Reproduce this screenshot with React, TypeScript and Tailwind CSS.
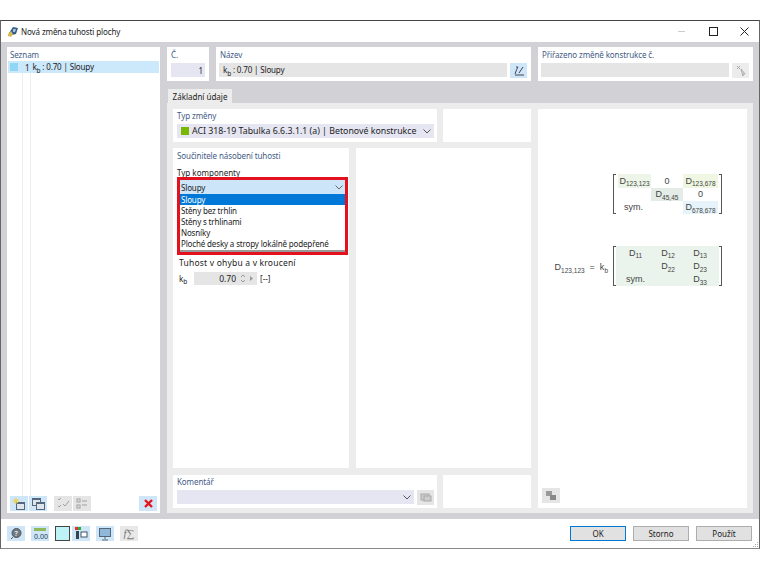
import React from "react";

const Btn = ({ c = "bg-[#cfe6f8]", children, w = "w-[18px]" }: { c?: string; children?: React.ReactNode; w?: string }) => (
  <div className={`${w} h-[15px] ${c} flex items-center justify-center shrink-0`}>{children}</div>
);

const Win = ({ x = 3, y = 3, c = "#52687f" }: { x?: number; y?: number; c?: string }) => (
  <g>
    <rect x={x + 0.5} y={y + 0.5} width="8" height="7" fill="#dfe5ea" stroke={c} strokeWidth="1" />
    <rect x={x} y={y} width="9" height="2" fill={c} />
  </g>
);

const Sub = ({ children }: { children: React.ReactNode }) => <sub className="text-[6.5px] leading-none align-[-1px]">{children}</sub>;

const D = ({ n, c = "" }: { n: string; c?: string }) => (
  <div className={`flex items-center justify-center ${c}`}>
    <span>D<Sub>{n}</Sub></span>
  </div>
);

const Bracket = ({ right = false }: { right?: boolean }) => (
  <div className={`w-[3px] self-stretch border-y border-[#555] ${right ? "border-r" : "border-l"} shrink-0`} />
);

const Chevron = ({ c = "#555" }: { c?: string }) => (
  <svg width="8" height="5"><path d="M0.5 0.5 L4 4 L7.5 0.5" stroke={c} fill="none" /></svg>
);

const Label = ({ children, className = "" }: { children: React.ReactNode; className?: string }) => (
  <div className={`text-[#3f5b85] text-[8px] tracking-[-0.1px] leading-[11px] ${className}`}>{children}</div>
);

export default function App() {
  return (
    <div className="w-[760px] h-[570px] bg-white text-[#222] text-[8px] leading-[11px]" style={{ fontFamily: '"Noto Sans", sans-serif' }}>
      <div className="h-5" />
      <div className="w-[760px] h-[529px] border-t border-x border-t-[#444] border-x-[#666] border-b border-b-[#888] flex flex-col bg-[#d1d1d6]">
        <div className="h-[21px] bg-white flex items-center shrink-0">
          <svg className="ml-[6px]" width="12" height="13" viewBox="0 0 12 13">
            <path d="M2 8 L6 2 L11 3 L9 9 L5 10 Z" fill="#2d5f8a" />
            <path d="M1 9 L4 6 L6 9 L4 12 L1 11 Z" fill="#d8b84a" />
            <path d="M6 4 L9 4 L8 7 L6 7 Z" fill="#a9c2da" />
          </svg>
          <span className="ml-[2px] text-[8px] tracking-[-0.1px]">Nová změna tuhosti plochy</span>
          <div className="ml-auto flex items-center">
            <div className="w-[32px] flex justify-center"><div className="w-[7px] h-px bg-[#ccc]" /></div>
            <div className="w-[32px] flex justify-center"><div className="w-[9px] h-[9px] border border-[#222]" /></div>
            <div className="w-[30px] flex justify-center">
              <svg width="9" height="9" viewBox="0 0 9 9"><path d="M0.5 0.5 L8.5 8.5 M8.5 0.5 L0.5 8.5" stroke="#222" strokeWidth="1" /></svg>
            </div>
          </div>
        </div>

        <div className="flex-1 flex gap-[7px] pl-[6px] pr-[6px] pt-[5px] pb-[6px] min-h-0">
          {/* Seznam */}
          <div className="w-[153px] bg-white flex flex-col px-[1px] shrink-0">
            <Label className="h-[14px] pl-[2px] pt-[2px]">Seznam</Label>
            <div className="h-[12px] bg-[#cce8fb] flex items-center pl-[2px] tracking-[-0.15px]">
              <div className="w-[8px] h-[8px] bg-[#8fd6f7]" />
              <span className="ml-[7px]">1</span>
              <span className="ml-[3px]">k<Sub>b</Sub> : 0.70 | Sloupy</span>
            </div>
            <div className="flex-1 flex pl-[14px]">
              <div className="w-[9px] border-x border-[#eee]" />
            </div>
            <div className="flex h-[15px] mb-[2px] items-center pl-[2px] pr-[2px]">
              <Btn>
                <svg width="16" height="14"><Win x={5} y={5} /><path d="M5 1v6M2 4h6M3 2l4 4M7 2L3 6" stroke="#f0d040" /></svg>
              </Btn>
              <div className="w-px" />
              <Btn>
                <svg width="16" height="14"><Win x={2} y={1} /><Win x={6} y={5} /></svg>
              </Btn>
              <div className="w-[7px]" />
              <Btn c="bg-[#e5e5e5]">
                <svg width="14" height="13"><path d="M2 2l1 1 2-2M2 9l1 1 2-2M7 7l2 2 4-5" stroke="#a0a0a0" fill="none" /></svg>
              </Btn>
              <div className="w-px" />
              <Btn c="bg-[#e5e5e5]">
                <svg width="14" height="13"><rect x="2" y="2" width="3" height="3" fill="none" stroke="#a0a0a0" /><rect x="2" y="8" width="3" height="3" fill="none" stroke="#a0a0a0" /><path d="M7 4h5M7 8h5" stroke="#a0a0a0" /></svg>
              </Btn>
              <div className="ml-auto">
                <Btn>
                  <svg width="11" height="11"><path d="M2 2 L9 9 M9 2 L2 9" stroke="#e8141c" strokeWidth="2.4" /></svg>
                </Btn>
              </div>
            </div>
          </div>

          {/* Right */}
          <div className="w-[586px] flex flex-col min-w-0 shrink-0">
            <div className="flex gap-[7px] h-[34px] shrink-0">
              <div className="w-[42px] bg-white px-[4px] pt-[2px]">
                <Label className="h-[14px]">Č.</Label>
                <div className="h-[14px] bg-[#e6e6f2] flex items-center justify-end pr-[2px]">1</div>
              </div>
              <div className="w-[315px] bg-white pl-[3px] pr-[4px] pt-[2px]">
                <Label className="h-[14px] pl-[1px]">Název</Label>
                <div className="flex gap-[3px]">
                  <div className="flex-1 h-[14px] bg-[#e5e5e5] flex items-center pl-[4px] tracking-[-0.15px]"><span>k<Sub>b</Sub> : 0.70 | Sloupy</span></div>
                  <Btn w="w-[17px]">
                    <svg width="14" height="13"><path d="M3 10 Q5 4 6 3 H4 M7 9 L11 3 M3 11 H12" stroke="#445" fill="none" /></svg>
                  </Btn>
                </div>
              </div>
              <div className="w-[215px] bg-white pl-[3px] pr-[4px] pt-[2px]">
                <Label className="h-[14px] pl-[1px]">Přiřazeno změně konstrukce č.</Label>
                <div className="flex gap-[3px]">
                  <div className="flex-1 h-[14px] bg-[#e5e5e5]" />
                  <Btn c="bg-[#ececec]" w="w-[17px]">
                    <svg width="14" height="13"><path d="M3 2l3 3M6 2L3 5M7 5l4 5-2 0 0 2z" stroke="#aaa" fill="none" /></svg>
                  </Btn>
                </div>
              </div>
            </div>

            <div className="flex h-[22px] items-end shrink-0 pl-[1px]">
              <div className="w-[64px] h-[14px] bg-[#ececec] flex items-center justify-center">Základní údaje</div>
            </div>

            <div className="flex-1 bg-[#ececec] flex gap-[7px] pt-[6px] pb-[5px] pl-[6px] pr-[6px] min-h-0">
              <div className="w-[358px] flex flex-col gap-[6px] shrink-0">
                <div className="flex gap-[6px] h-[33px] shrink-0">
                  <div className="w-[264px] bg-white pl-[4px] pr-[3px] pt-[1px]">
                    <Label className="h-[14px]">Typ změny</Label>
                    <div className="h-[14px] bg-[#e6e6f2] flex items-center pl-[4px] pr-[3px]">
                      <div className="w-[8px] h-[8px] bg-[#7ab800] shrink-0" />
                      <span className="ml-[3px] text-[8.8px] whitespace-nowrap">ACI 318-19 Tabulka 6.6.3.1.1 (a) | Betonové konstrukce</span>
                      <div className="ml-auto"><Chevron /></div>
                    </div>
                  </div>
                  <div className="flex-1 bg-white" />
                </div>
                <div className="flex gap-[7px] flex-1 min-h-0">
                  <div className="w-[176px] bg-white pt-[2px] relative">
                    <Label className="pl-[4px] h-[12px]">Součinitele násobení tuhosti</Label>
                    <div className="pl-[4px] mt-[5px] h-[13px]">Typ komponenty</div>
                    <div className="absolute left-[4px] top-[29px] w-[171px] h-[78px] border-[3px] border-[#e3101d] bg-white flex flex-col tracking-[-0.15px] whitespace-nowrap">
                      <div className="h-[14px] bg-[#cde5f9] flex items-center pl-[1px] shrink-0">
                        Sloupy
                        <div className="ml-auto mr-[2px]"><Chevron c="#666" /></div>
                      </div>
                      <div className="h-[11px] bg-[#0078d7] text-white flex items-center pl-[1px] shrink-0">Sloupy</div>
                      <div className="h-[11px] flex items-center pl-[1px] shrink-0">Stěny bez trhlin</div>
                      <div className="h-[11px] flex items-center pl-[1px] shrink-0">Stěny s trhlinami</div>
                      <div className="h-[11px] flex items-center pl-[1px] shrink-0">Nosníky</div>
                      <div className="h-[11px] flex items-center pl-[1px] shrink-0">Ploché desky a stropy lokálně podepřené</div>
                      <div className="h-[2px] bg-[#999] mt-[1px] shrink-0" />
                    </div>
                    <div className="pl-[6px] mt-[77px] h-[12px] text-[8.5px] tracking-[0.2px]">Tuhost v ohybu a v kroucení</div>
                    <div className="flex items-center pl-[6px] mt-[3px] h-[13px]">
                      <span className="w-[15px]">k<Sub>b</Sub></span>
                      <div className="w-[63px] h-[13px] bg-[#e5e5e5] flex items-center justify-end text-[8.5px]">
                        <span>0.70</span>
                        <svg className="ml-[4px] mr-[3px]" width="14" height="9"><path d="M1 3l2-2 2 2M1 6l2 2 2-2" stroke="#999" fill="none" /><path d="M10 2l3 2.5L10 7z" fill="#999" /></svg>
                      </div>
                      <span className="ml-[3px]">[--]</span>
                    </div>
                  </div>
                  <div className="flex-1 bg-white" />
                </div>
                <div className="flex gap-[6px] h-[33px] shrink-0 mt-[1px]">
                  <div className="w-[264px] bg-white pl-[4px] pr-[3px] pt-[1px]">
                    <Label className="h-[14px]">Komentář</Label>
                    <div className="flex gap-[3px]">
                      <div className="flex-1 h-[14px] bg-[#e6e6f2] flex items-center justify-end pr-[3px]">
                        <Chevron />
                      </div>
                      <Btn c="bg-[#e5e5e5]" w="w-[17px]">
                        <svg width="14" height="13"><rect x="2" y="3" width="8" height="6" fill="#ccc" stroke="#aaa" /><rect x="5" y="5" width="7" height="5" fill="#ccc" stroke="#aaa" /></svg>
                      </Btn>
                    </div>
                  </div>
                  <div className="flex-1 bg-white" />
                </div>
              </div>

              <div className="flex-1 bg-white flex flex-col min-w-0 text-[9px] text-[#444]" style={{ fontFamily: '"Liberation Sans", sans-serif' }}>
                <div className="flex justify-end pr-[25px] mt-[65px]">
                  <div className="flex h-[40px]">
                    <Bracket />
                    <div className="grid grid-cols-[33px_32px_35px] grid-rows-[14px_13px_13px] ml-[2px] mr-[1px] text-center">
                      <D n="123,123" c="bg-[#ecf5e8]" />
                      <div className="leading-[14px]">0</div>
                      <D n="123,678" c="bg-[#eff6e2]" />
                      <div />
                      <D n="45,45" c="bg-[#e3ece6]" />
                      <div className="leading-[13px]">0</div>
                      <div className="leading-[13px] pr-[2px]">sym.</div>
                      <div />
                      <D n="678,678" c="bg-[#e6f3fa]" />
                    </div>
                    <Bracket right />
                  </div>
                </div>
                <div className="flex justify-end pr-[25px] mt-[32px] items-center">
                  <span className="mr-[5px] mt-[3px]">D<Sub>123,123</Sub>&nbsp;&nbsp;=&nbsp;&nbsp;k<Sub>b</Sub></span>
                  <div className="flex h-[40px]">
                    <Bracket />
                    <div className="grid grid-cols-[33px_32px_32px] grid-rows-[14px_13px_13px] bg-[#eaf4ec] pl-[3px] pr-[3px] text-center">
                      <D n="11" /><D n="12" /><D n="13" />
                      <div /><D n="22" /><D n="23" />
                      <div className="leading-[13px]">sym.</div><div /><D n="33" />
                    </div>
                    <Bracket right />
                  </div>
                </div>
                <div className="mt-auto pl-[4px] pb-[5px]">
                  <Btn c="bg-[#e5e5e5]">
                    <svg width="14" height="13"><rect x="2" y="2" width="6" height="5" fill="#999" /><rect x="6" y="6" width="6" height="5" fill="#888" /></svg>
                  </Btn>
                </div>
              </div>
            </div>
          </div>
        </div>

        <div className="h-[29px] bg-white flex items-center shrink-0 pl-[6px] pr-[7px] relative">
          <Btn>
            <svg width="14" height="13"><circle cx="7.5" cy="6" r="4.5" fill="#6f7a86" stroke="#555" /><path d="M4 10l-2 2" stroke="#555" /><text x="5.5" y="8.5" fontSize="7" fontWeight="700" fill="#dfe5ea">?</text></svg>
          </Btn>
          <div className="w-[6px]" />
          <Btn>
            <svg width="18" height="14"><rect x="3" y="1" width="12" height="3" fill="#8dbb5a" /><text x="3" y="12" fontSize="7" fill="#245">0.00</text></svg>
          </Btn>
          <div className="w-[6px]" />
          <div className="w-[15px] h-[15px] bg-[#bdf2f6] border border-[#444] shrink-0" />
          <div className="w-[2px]" />
          <Btn>
            <svg width="14" height="14"><rect x="1" y="0" width="3" height="3" fill="#d33" /><rect x="4" y="0" width="3" height="3" fill="#3a3" /><rect x="2" y="4" width="3" height="8" fill="#345" /><rect x="7" y="5" width="6" height="5" fill="#fff" stroke="#456" /></svg>
          </Btn>
          <div className="w-[6px]" />
          <Btn>
            <svg width="14" height="14"><rect x="1.5" y="1.5" width="11" height="8" fill="#8fb8da" stroke="#567" /><path d="M7 9v3M4 13h6" stroke="#567" /></svg>
          </Btn>
          <div className="w-[6px]" />
          <Btn c="bg-[#e8e8e8]">
            <span className="italic text-[#777] text-[11px]" style={{ fontFamily: '"Liberation Serif", serif' }}>f∑</span>
          </Btn>
          <div className="ml-auto flex gap-[7px]">
            <div className="w-[56px] h-[15px] bg-[#e1e1e1] border-[1.5px] border-[#0078d7] flex items-center justify-center">OK</div>
            <div className="w-[56px] h-[15px] bg-[#e1e1e1] border border-[#adadad] flex items-center justify-center">Storno</div>
            <div className="w-[56px] h-[15px] bg-[#e1e1e1] border border-[#adadad] flex items-center justify-center">Použít</div>
          </div>
          <svg className="absolute right-[1px] bottom-[1px]" width="6" height="6"><path d="M5 1h1v1H5zM3 3h1v1H3zM5 3h1v1H5zM1 5h1v1H1zM3 5h1v1H3zM5 5h1v1H5z" fill="#aaa" /></svg>
        </div>
      </div>
    </div>
  );
}
